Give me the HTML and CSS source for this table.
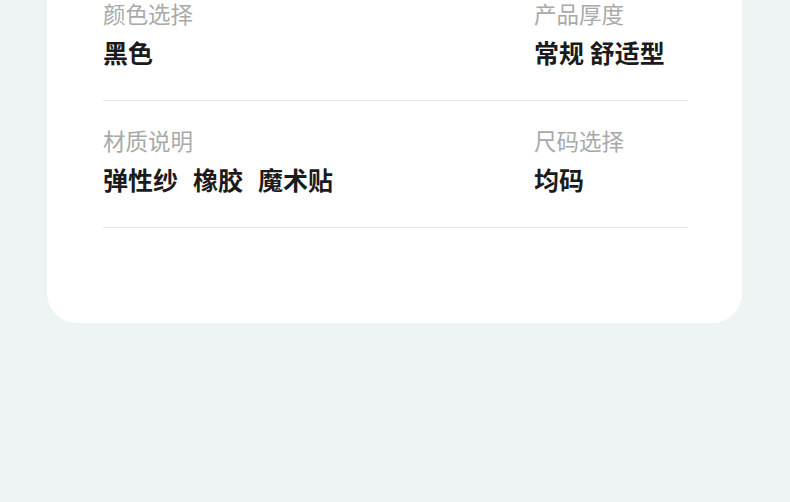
FILE: index.html
```html
<!DOCTYPE html>
<html lang="zh">
<head>
  <meta charset="UTF-8" />
  <meta name="viewport" content="width=device-width, initial-scale=1.0"/>
  <title>商品参数</title>
  <link rel="stylesheet" href="styles.css">
</head>
<body>
  <div class="card">
    <div class="row">
      <div class="cell">
        <div class="label">颜色选择</div>
        <div class="value">黑色</div>
      </div>
      <div class="cell">
        <div class="label">产品厚度</div>
        <div class="value">常规 舒适型</div>
      </div>
    </div>
    <div class="row">
      <div class="cell">
        <div class="label">材质说明</div>
        <div class="value tags"><span>弹性纱</span><span>橡胶</span><span>魔术贴</span></div>
      </div>
      <div class="cell">
        <div class="label">尺码选择</div>
        <div class="value">均码</div>
      </div>
    </div>
  </div>
</body>
</html>
```
FILE: styles.css
```css
html, body {
  margin: 0;
  padding: 0;
  height: 100vh;
  overflow: hidden;
  background: #eef4f3;
  font-family: "Noto Sans CJK SC", "Noto Sans", sans-serif;
}
.card {
  margin: 0 48px 0 47px;
  padding: 0 54px 95px 56px;
  background: #fff;
  border-radius: 0 0 30px 30px;
}
.row {
  display: grid;
  grid-template-columns: 431px 1fr;
  padding: 26px 0 31px 0;
  border-bottom: 1px solid #e4e4e4;
}
.row:first-child {
  padding-top: 0;
}
.label {
  font-size: 22.5px;
  line-height: 26px;
  color: #a9a9a9;
}
.value {
  margin-top: 10px;
  font-size: 25px;
  line-height: 33px;
  font-weight: 700;
  color: #1b1b1b;
}
.tags {
  display: flex;
  gap: 15px;
}
```
